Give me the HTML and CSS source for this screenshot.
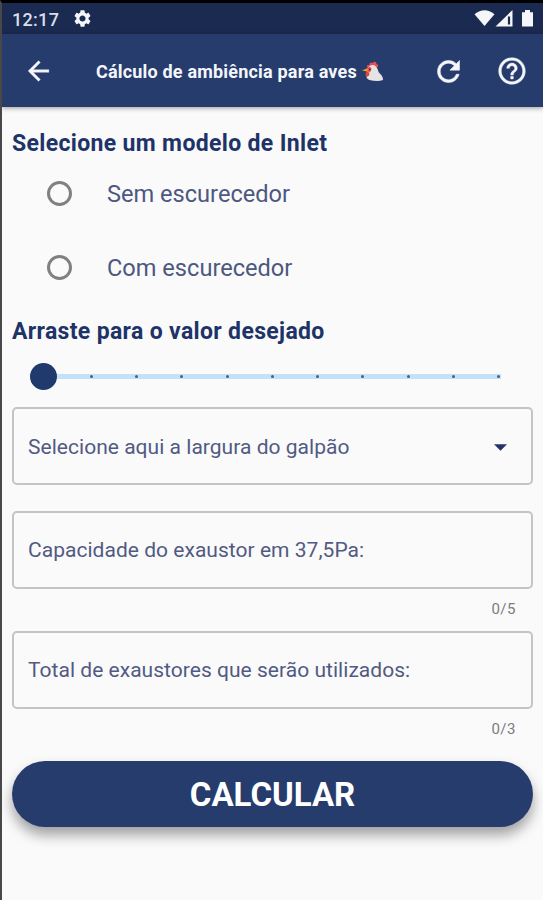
FILE: index.html
```
<!DOCTYPE html>
<html lang="pt-BR">
<head>
<meta charset="utf-8">
<title>Cálculo de ambiência para aves</title>
<link rel="stylesheet" href="styles.css">
</head>
<body>
<div class="screen">
  <div class="status">
    <span class="clock">12:17</span>
    <svg class="gear" viewBox="2 2 20 20"><path fill="currentColor" fill-rule="evenodd" d="M19.14 12.94c.04-.3.06-.61.06-.94 0-.32-.02-.64-.07-.94l2.03-1.58c.18-.14.23-.41.12-.61l-1.92-3.32c-.12-.22-.37-.29-.59-.22l-2.39.96c-.5-.38-1.03-.7-1.62-.94l-.36-2.54c-.04-.24-.24-.41-.48-.41h-3.84c-.24 0-.43.17-.47.41l-.36 2.54c-.59.24-1.13.57-1.62.94l-2.39-.96c-.22-.08-.47 0-.59.22L2.74 8.87c-.12.21-.08.47.12.61l2.03 1.58c-.05.3-.09.63-.09.94s.02.64.07.94l-2.03 1.58c-.18.14-.23.41-.12.61l1.92 3.32c.12.22.37.29.59.22l2.39-.96c.5.38 1.03.7 1.62.94l.36 2.54c.05.24.24.41.48.41h3.84c.24 0 .44-.17.47-.41l.36-2.54c.59-.24 1.13-.56 1.62-.94l2.39.96c.22.08.47 0 .59-.22l1.92-3.32c.12-.22.07-.47-.12-.61l-2.01-1.58zM12 15.6c-1.98 0-3.6-1.62-3.6-3.6s1.62-3.6 3.6-3.6 3.6 1.62 3.6 3.6-1.62 3.6-3.6 3.6z"/></svg>
    <svg class="signals" viewBox="0 0 60 20"><g fill="currentColor"><path d="M.5 5.200Q10.500-2.700 20.500 5.200L10.500 17Z"/><path d="M21.500 17.500 38.500 1V17.500Z"/><path d="M48 3.200h3V1h5v2.200h3v14.300H48Z"/></g><path d="M35 7.500v8" stroke="#1b2a50" stroke-width="2.200"/></svg>
  </div>
  <header class="appbar">
    <svg class="back" viewBox="0 0 24 24"><path fill="currentColor" stroke="currentColor" stroke-width=".3" d="M20 11H7.830l5.590-5.590L12 4l-8 8 8 8 1.410-1.410L7.830 13H20v-2z"/></svg>
    <h1 class="title"><span>Cálculo de ambiência para aves</span>
      <svg class="hen" viewBox="0 0 20 20"><path fill="#e94f50" d="M5 6Q4 3 7 4Q7 0 10 2Q13-1 14 3Q16 3 15 6L9 8Z"/><path fill="#e6e3e4" d="M5 7Q9 2 13 5Q15 7 16 11Q20 14 20 18Q15 20 7 18Q3 17 5 12Z"/><path fill="#f49a28" d="M0 9 6 6.500 7 10.500Z"/><path fill="#dc4342" d="M4 10.500Q6 9 7 12Q7 15 4.500 15Q2.500 13 4 10.500Z"/><path fill="#e94f50" d="M5 7Q7 4 9 7Q9 10 7 11Q5 10 5 7Z"/><circle cx="7.500" cy="8" r=".9" fill="#46383f"/></svg>
    </h1>
    <svg class="refresh" viewBox="0 0 24 24"><path fill="currentColor" stroke="currentColor" stroke-width=".4" d="M17.650 6.350C16.200 4.900 14.210 4 12 4c-4.420 0-7.990 3.580-7.990 8s3.570 8 7.990 8c3.730 0 6.840-2.550 7.730-6h-2.080c-.82 2.330-3.040 4-5.650 4-3.310 0-6-2.690-6-6s2.690-6 6-6c1.660 0 3.140.69 4.220 1.780L13 11h7V4l-2.350 2.350z"/></svg>
    <svg class="help" viewBox="0 0 24 24"><path fill="currentColor" stroke="currentColor" stroke-width=".3" d="M11 18h2v-2h-2v2zm1-16C6.480 2 2 6.480 2 12s4.480 10 10 10 10-4.480 10-10S17.520 2 12 2zm0 18c-4.410 0-8-3.590-8-8s3.590-8 8-8 8 3.590 8 8-3.590 8-8 8zm0-14c-2.210 0-4 1.790-4 4h2c0-1.100.9-2 2-2s2 .9 2 2c0 2-3 1.750-3 5h2c0-2.250 3-2.500 3-5 0-2.210-1.790-4-4-4z"/></svg>
  </header>
  <main class="content">
    <h2 class="heading inlet">Selecione um modelo de Inlet</h2>
    <div class="option"><i class="radio"></i><span>Sem escurecedor</span></div>
    <div class="option"><i class="radio"></i><span>Com escurecedor</span></div>
    <h2 class="heading drag">Arraste para o valor desejado</h2>
    <div class="slider">
      <div class="thumb"></div>
      <div class="track"><i></i><i></i><i></i><i></i><i></i><i></i><i></i><i></i><i></i><i></i></div>
    </div>
    <div class="field select"><span>Selecione aqui a largura do galpão</span><svg class="caret" viewBox="0 0 12 6"><path fill="#23346b" d="M0 0h12L6 6Z"/></svg></div>
    <div class="field"><span>Capacidade do exaustor em 37,5Pa:</span></div>
    <div class="counter">0/5</div>
    <div class="field"><span>Total de exaustores que serão utilizados:</span></div>
    <div class="counter">0/3</div>
    <button class="calc">CALCULAR</button>
  </main>
</div>
</body>
</html>
```
FILE: styles.css
```
* { box-sizing: border-box; }
body { margin: 0; font-family: Roboto, "Liberation Sans", sans-serif; background: #fafafa; }
h1, h2 { margin: 0; }
svg { display: block; flex: none; }
.screen { height: 900px; overflow: hidden; border-left: 2px solid #48484b; border-top: 3px solid #000; background: #fafafa; }
.status { height: 31px; background: #1b2a50; color: #f5f6fa; display: flex; align-items: center; padding: 0 9px 0 10px; }
.clock { font-size: 18px; font-weight: 500; letter-spacing: .3px; line-height: 31px; color: #d9deea; padding-top: 1px; width: 47px; }
.gear { width: 17px; height: 17px; margin-left: 15px; }
.signals { width: 60px; height: 20px; margin-left: auto; }
.appbar { height: 73px; background: #263c6d; color: #f5f6fb; display: flex; align-items: center; padding: 0 15px 0 21px; box-shadow: 0 1px 5px rgba(0,0,0,.4); position: relative; }
.back { width: 31px; height: 32px; }
.title { font-size: 18px; font-weight: 700; letter-spacing: .19px; display: flex; align-items: center; margin-left: 42px; gap: 5px; white-space: nowrap; flex: 1; line-height: 24px; padding-top: 2px; }
.hen { width: 21px; height: 21px; }
.refresh { width: 33px; height: 33px; margin: 1px 31px 0 0; }
.help { width: 32px; height: 32px; margin-top: 1px; }
.content { padding: 21px 10px 0 10px; color: #263c6d; }
.heading { font-size: 23px; font-weight: 700; line-height: 32px; letter-spacing: .34px; color: #203368; white-space: nowrap; }
.option { height: 74px; display: flex; align-items: center; gap: 35px; padding-left: 35px; font-size: 23.6px; color: #4c587f; }
.option span { padding-top: 1px; }
.inlet + .option { margin-top: -4px; }
.radio { width: 25px; height: 25px; border: 3px solid #808080; border-radius: 50%; }
.drag { margin-top: 12px; }
.slider { height: 61px; margin-top: -2px; display: flex; align-items: center; padding-left: 18px; }
.thumb { width: 27px; height: 27px; border-radius: 50%; background: #203a6d; }
.track { width: 444px; height: 5px; background: #c5e1fa; display: flex; align-items: center; justify-content: space-between; padding: 0 1px 0 33px; }
.track i { width: 3px; height: 3px; border-radius: 50%; background: #49617f; }
.field { height: 78px; border: 2px solid #c4c4c6; border-radius: 5px; padding: 0 24px 0 14px; display: flex; align-items: center; font-size: 21px; letter-spacing: .03px; color: #515a83; white-space: nowrap; }
.select { margin-bottom: 26px; justify-content: space-between; padding-top: 2px; }
.caret { width: 13px; height: 7px; }
.counter { height: 42px; text-align: right; padding-right: 17px; font-size: 15px; line-height: 41px; color: #7b7b7d; letter-spacing: .5px; }
.calc { margin: 10px 0 0; display: block; width: 100%; height: 66px; border: 0; border-radius: 33px; background: #263c6d; color: #fff; font: 700 33px/64px Roboto, sans-serif; padding: 2px 0 0; box-shadow: 0 8px 13px rgba(0,0,0,.36); }
```
